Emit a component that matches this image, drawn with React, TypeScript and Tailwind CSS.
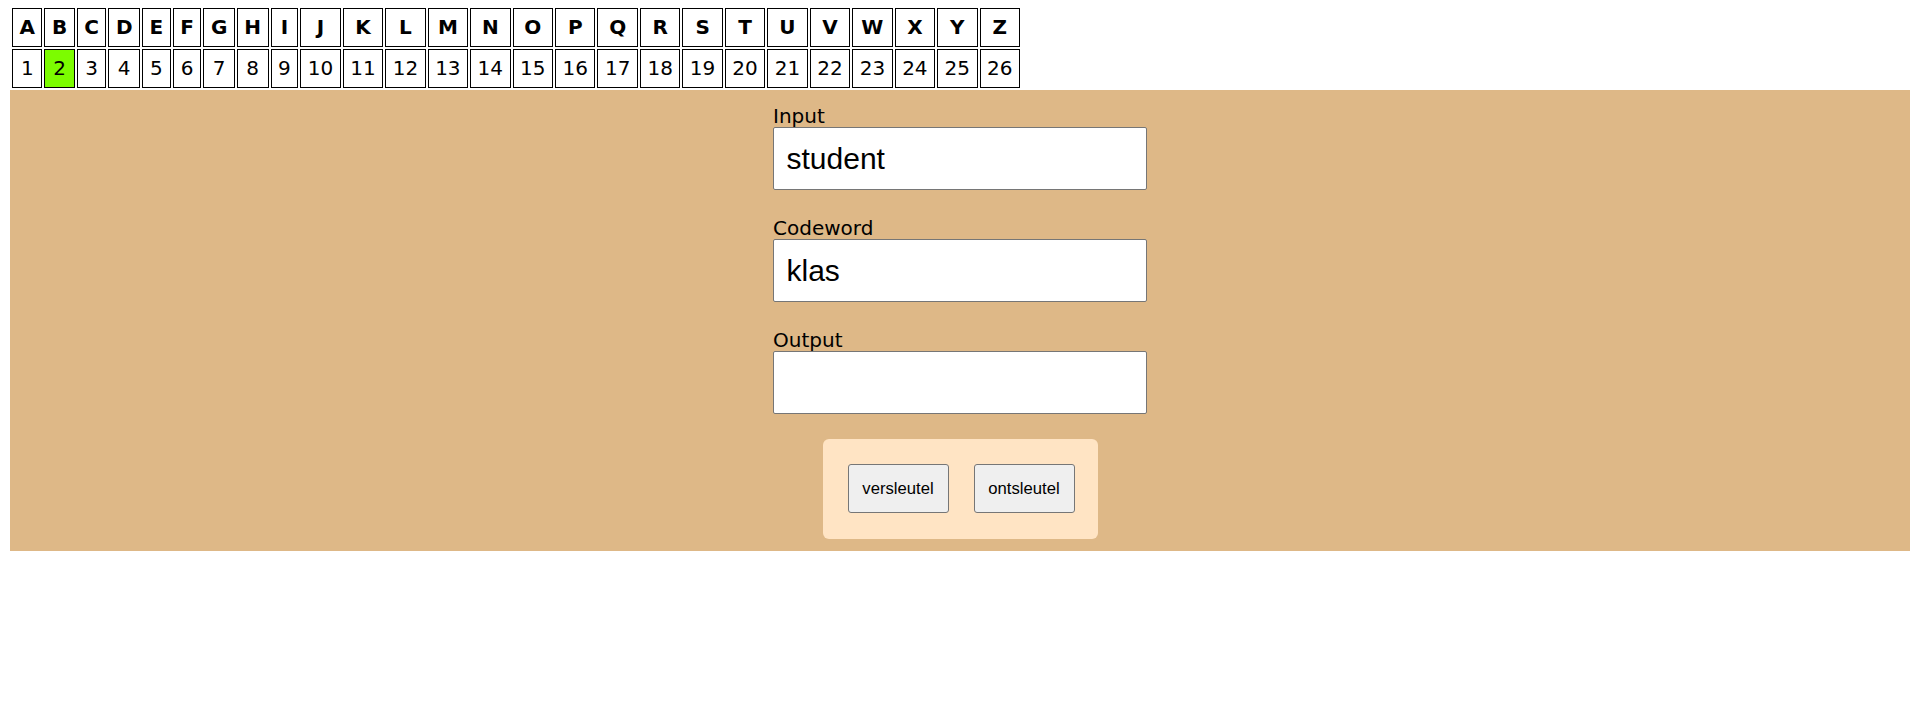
const letters = 'ABCDEFGHIJKLMNOPQRSTUVWXYZ'.split('');

type Field = {
  label: string;
  value: string;
};

const fields: Field[] = [
  { label: 'Input', value: 'student' },
  { label: 'Codeword', value: 'klas' },
  { label: 'Output', value: '' },
];

export default function App() {
  const active = 1;

  return (
    <div className="min-h-[715px] bg-white px-[10px] font-['DejaVu_Sans',Verdana,sans-serif] text-black">
      <table className="mt-[6px] border-separate border-spacing-x-[2.5px] border-spacing-y-[2px] text-[20px]">
        <tbody>
          <tr>
            {letters.map((l) => (
              <td
                key={l}
                className="h-[39px] border border-black px-[6.5px] py-0 text-center font-bold leading-[23px]"
              >
                {l}
              </td>
            ))}
          </tr>
          <tr>
            {letters.map((l, i) => (
              <td
                key={l}
                className={
                  i === active
                    ? 'h-[39px] border border-black bg-[#7cfc00] px-[6.5px] py-0 text-center leading-[23px]'
                    : 'h-[39px] border border-black px-[6.5px] py-0 text-center leading-[23px]'
                }
              >
                {i + 1}
              </td>
            ))}
          </tr>
        </tbody>
      </table>

      <div className="flex flex-col items-center bg-[#deb887] pt-[15px] pb-[12px]">
        {fields.map((f, i) => (
          <div key={f.label} className={i > 0 ? 'mt-[27px] w-[374px]' : 'w-[374px]'}>
            <label className="block text-[20px] leading-[22px]">{f.label}</label>
            <input
              type="text"
              defaultValue={f.value}
              className="box-border block h-[63px] w-[374px] rounded-[2px] border border-[#767676] bg-white px-[12.5px] font-['Liberation_Sans',Arial,sans-serif] text-[30px] text-black outline-none"
            />
          </div>
        ))}

        <div className="mt-[25px] flex w-[275px] gap-[25px] rounded-[6px] bg-[#ffe4c4] pt-[25px] pb-[26px] pl-[25px] pr-[23px]">
          <button className="h-[49px] w-[101px] rounded-[3px] border border-[#767676] bg-[#efefef] font-['Liberation_Sans',Arial,sans-serif] text-[16.67px] text-black">
            versleutel
          </button>
          <button className="h-[49px] w-[101px] rounded-[3px] border border-[#767676] bg-[#efefef] font-['Liberation_Sans',Arial,sans-serif] text-[16.67px] text-black">
            ontsleutel
          </button>
        </div>
      </div>
    </div>
  );
}
